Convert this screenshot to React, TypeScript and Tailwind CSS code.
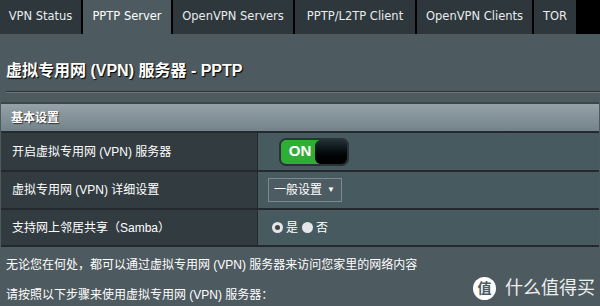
import { useState } from 'react'

const tabs = [
  { label: 'VPN Status', w: 'w-[81px]' },
  { label: 'PPTP Server', w: 'w-[88px]', active: true },
  { label: 'OpenVPN Servers', w: 'w-[120px]' },
  { label: 'PPTP/L2TP Client', w: 'w-[120px]' },
  { label: 'OpenVPN Clients', w: 'w-[115px]' },
  { label: 'TOR', w: 'w-[42px]' },
]

const cjk = { fontFamily: '"Liberation Sans", "Noto Sans CJK SC", sans-serif' }

export default function App() {
  const [on, setOn] = useState(true)
  const [share, setShare] = useState(true)

  return (
    <div className="h-[306px] w-[600px] overflow-hidden bg-[#4d5a5f] text-white" style={cjk}>
      <div className="flex h-[34px] gap-[2px] bg-black" style={{ fontFamily: '"DejaVu Sans", Verdana, sans-serif' }}>
        {tabs.map((t) => (
          <div
            key={t.label}
            className={`${t.w} flex shrink-0 items-center justify-center text-[11.5px] ${
              t.active ? 'bg-[#4d5a5f] text-white' : 'bg-[#2e373b] text-[#e8ecee]'
            }`}
          >
            {t.label}
          </div>
        ))}
      </div>

      <div className="pl-[6px] pt-[27px]">
        <h1 className="text-[16px] font-bold leading-[20px] [text-shadow:1px_1px_1px_#000]">
          虚拟专用网 (VPN) 服务器 - PPTP
        </h1>
        <div className="mt-[10px] h-[2px] border-t border-[#2c3437] bg-[#6a767b]" />
      </div>

      <div className="mx-[1px] mt-[9px] border-t-2 border-[#3c4549]">
        <div className="flex h-[27px] items-center bg-gradient-to-b from-[#95a2a8] to-[#74828a] pl-[10px] text-[12px] font-bold [text-shadow:1px_1px_1px_#333]">
          基本设置
        </div>

        <div className="border-t-2 border-[#23292c] text-[12px]">
          <div className="flex h-[39px] border-b-2 border-[#23292c]">
            <div className="flex w-[257px] items-center border-r border-[#23292c] bg-[#323b3f] pl-[11px]">
              开启虚拟专用网 (VPN) 服务器
            </div>
            <div className="flex flex-1 items-center bg-[#475a5f] pl-[21px]">
              <button
                onClick={() => setOn(!on)}
                className="flex h-[28px] w-[70px] overflow-hidden rounded-[7px] border border-[#2a3235] bg-[#2a3235] p-[1px]"
              >
                <span className="flex w-[38px] items-center justify-center rounded-l-[5px] bg-[#2fae36] text-[15px] font-semibold text-white">
                  {on ? 'ON' : ''}
                </span>
                <span className="-ml-[4px] flex-1 rounded-[6px] bg-gradient-to-b from-[#223036] to-[#000]" />
              </button>
            </div>
          </div>

          <div className="flex h-[38px] border-b-2 border-[#23292c]">
            <div className="flex w-[257px] items-center border-r border-[#23292c] bg-[#323b3f] pl-[11px]">
              虚拟专用网 (VPN) 详细设置
            </div>
            <div className="flex flex-1 items-center bg-[#475a5f] pl-[10px]">
              <div className="flex h-[24px] w-[74px] items-center gap-[5px] border border-[#7c8a90] bg-[#4d5c62] pl-[5px] text-[12px]">
                一般设置 <span className="text-[8px]">▼</span>
              </div>
            </div>
          </div>

          <div className="flex h-[37px] border-b-2 border-[#23292c]">
            <div className="flex w-[257px] items-center border-r border-[#23292c] bg-[#323b3f] pl-[11px]">
              支持网上邻居共享（Samba）
            </div>
            <div className="flex flex-1 items-center bg-[#475a5f] pl-[14px] text-[12px]">
              <label className="flex items-center gap-[3px]" onClick={() => setShare(true)}>
                <span className="flex h-[11px] w-[11px] items-center justify-center rounded-full bg-[#e6e6e6]">
                  {share && <span className="h-[5px] w-[5px] rounded-full bg-[#444]" />}
                </span>
                是
              </label>
              <label className="ml-[4px] flex items-center gap-[3px]" onClick={() => setShare(false)}>
                <span className="flex h-[11px] w-[11px] items-center justify-center rounded-full bg-[#e6e6e6]">
                  {!share && <span className="h-[5px] w-[5px] rounded-full bg-[#444]" />}
                </span>
                否
              </label>
            </div>
          </div>
        </div>
      </div>

      <div className="relative pl-[6px] pt-[10px] text-[12px]">
        <p className="leading-[16px]">无论您在何处，都可以通过虚拟专用网 (VPN) 服务器来访问您家里的网络内容</p>
        <p className="mt-[14px] leading-[16px]">请按照以下步骤来使用虚拟专用网 (VPN) 服务器：</p>

        <div className="absolute right-[5px] top-[29px] flex items-center gap-[9px] text-white/90">
          <span className="flex h-[23px] w-[23px] items-center justify-center rounded-full bg-white text-[14px] font-bold text-[#4d5a5f]">
            值
          </span>
          <span className="text-[18px] leading-[24px]">什么值得买</span>
        </div>
      </div>
    </div>
  )
}
